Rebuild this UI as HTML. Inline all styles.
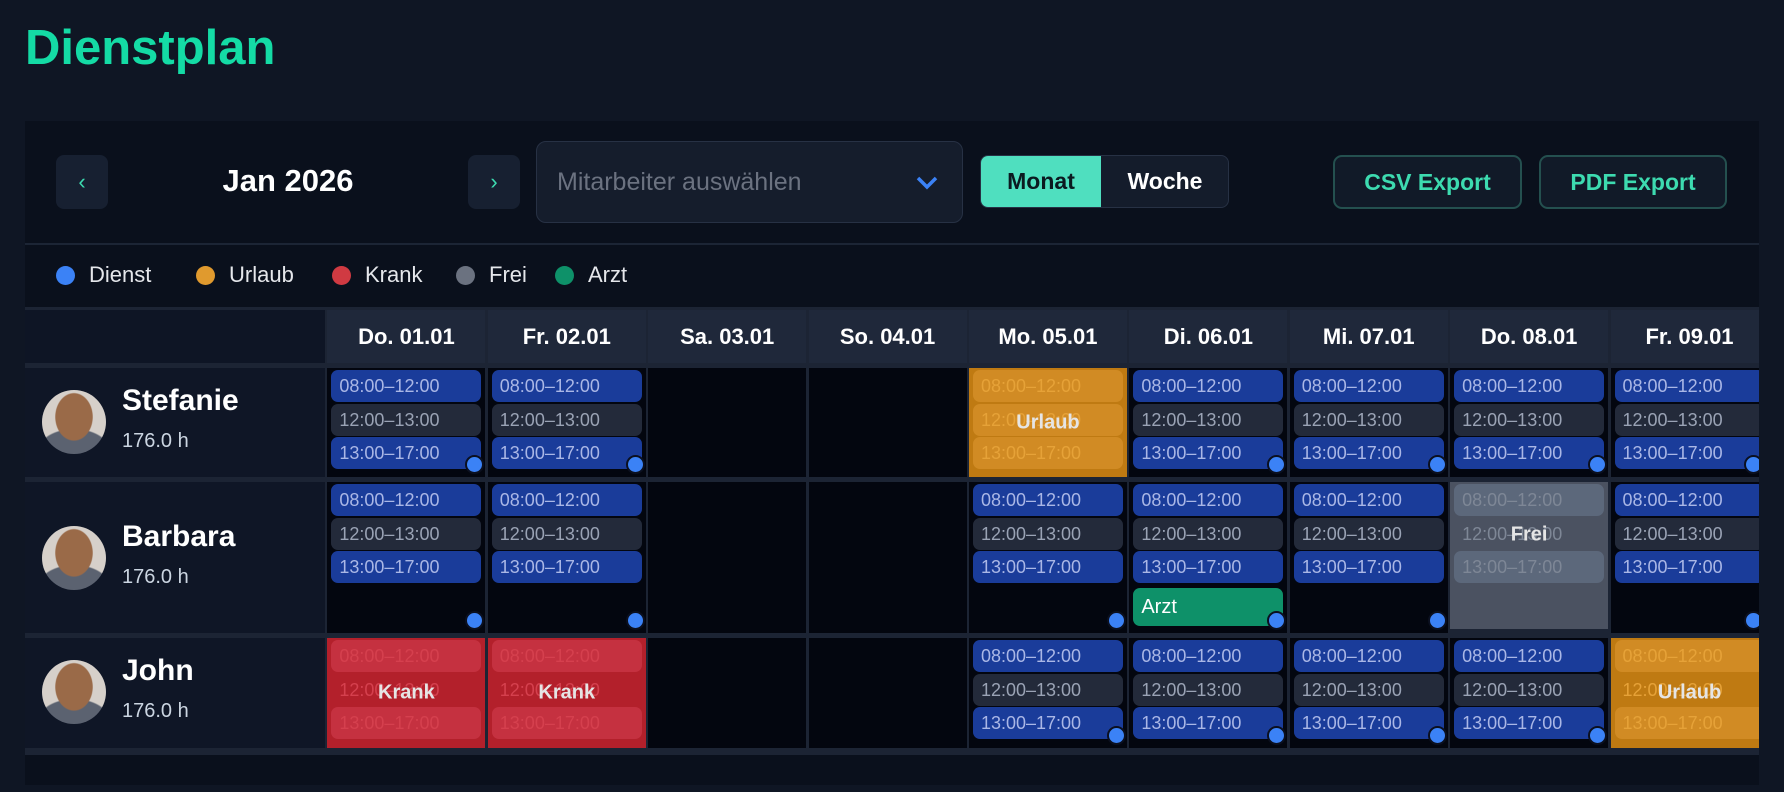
<!DOCTYPE html>
<html><head><meta charset="utf-8"><style>
*{box-sizing:border-box;margin:0;padding:0}
body{width:1784px;height:792px;background:#0f1624;font-family:"Liberation Sans",sans-serif;overflow:hidden;position:relative}
h1{position:absolute;left:25px;top:20px;font-size:49px;font-weight:700;color:#14dba5;letter-spacing:0}
.panel{position:absolute;left:25px;top:121px;width:1734px;height:664px;background:#0a101c;overflow:hidden}
.abs{position:absolute}
.nav{position:absolute;top:34px;width:52px;height:54px;background:#172031;border-radius:8px;color:#3ddbb0;font-size:22px;text-align:center;line-height:54px}
.sel{position:absolute;left:511px;top:20px;width:427px;height:82px;background:#151d2c;border:1px solid #273144;border-radius:10px}
.tog{position:absolute;left:955px;top:34px;width:249px;height:53px;background:#141c2b;border:1px solid #273144;border-radius:8px;overflow:hidden}
.btn{position:absolute;top:34px;height:54px;border:2px solid #24504f;border-radius:9px;background:#111a28;color:#3ddbb0;font-weight:700;font-size:23px;text-align:center;line-height:50px}
.sep{position:absolute;left:0;top:122px;width:100%;height:2px;background:#1c2535}
.leg{position:absolute;top:142px;height:24px;font-size:22px;color:#e5e7eb;line-height:24px}
.leg i{display:inline-block;width:19px;height:19px;border-radius:50%;vertical-align:-3px;margin-right:14px}
.grid{position:absolute;left:0;top:186px;width:1800px;height:448px;background:#1c2434;display:grid;grid-template-columns:300px repeat(9,158px);column-gap:2.4px;row-gap:5px;grid-template-rows:53px 109px 151px 110px;padding-left:0;padding-top:3px}
.hd{background:#1f283a;color:#fff;font-weight:700;font-size:22px;text-align:center;line-height:53px}
.corner{background:#0e1525}
.nm{background:#0f1626;position:relative}
.av{position:absolute;left:17px;width:64px;height:64px;border-radius:50%;background:radial-gradient(ellipse 30% 38% at 50% 42%,#9a6a48 0 95%,transparent 100%),radial-gradient(ellipse 60% 40% at 50% 100%,#5b6270 0 95%,transparent 100%),#d6d0ca}
.nm b{position:absolute;left:97px;font-size:30px;color:#fff;font-weight:700}
.nm span{position:absolute;left:97px;font-size:20px;color:#cbd5e1}
.c{background:#03060f;position:relative}
.ch{position:absolute;left:4px;right:4px;height:32px;border-radius:7px;font-size:18px;line-height:32px;padding-left:8px;color:#aab7e6}
.b{background:#1a3c9a}.g{background:#232a3a;color:#9aa3b5}
.t1{top:2px}.t2{top:36px}.t3{top:69px}
.dot{position:absolute;right:1px;width:19px;height:19px;border-radius:50%;background:#3b82f6;border:2px solid #0b1020}
.U{background:#bf7a12}.U .ch{background:rgba(230,160,60,.45);color:#e6a238}
.K{background:#b3202b}.K .ch{background:rgba(220,70,90,.45);color:#d5404e}
.F{background:#4b5261}.F .ch{background:rgba(110,125,150,.5);color:#7e8796}
.lab{position:absolute;left:0;right:0;top:50%;transform:translateY(-50%);text-align:center;color:#e5e5e5;font-weight:700;font-size:20px}
.arzt{position:absolute;left:4px;right:4px;top:106px;height:38px;background:#0e9169;border-radius:7px;color:#fff;font-size:20px;line-height:38px;padding-left:8px}
</style></head><body>
<h1>Dienstplan</h1>
<div class="panel">
<div class="nav" style="left:31px">‹</div>
<div class="abs" style="left:113px;width:300px;text-align:center;top:42px;font-size:31px;font-weight:700;color:#fff">Jan 2026</div>
<div class="nav" style="left:443px">›</div>
<div class="sel"><div class="abs" style="left:20px;top:26px;font-size:25px;color:#6b7280">Mitarbeiter auswählen</div>
<svg class="abs" style="left:378px;top:32px" width="24" height="18" viewBox="0 0 24 18"><path d="M3 4 L12 13 L21 4" stroke="#3b82f6" stroke-width="3.5" fill="none"/></svg></div>
<div class="tog"><div class="abs" style="left:0;top:0;width:120px;height:53px;background:#4fdfbf;color:#0b1a20;font-weight:700;font-size:23px;text-align:center;line-height:51px">Monat</div>
<div class="abs" style="left:120px;top:0;width:128px;height:53px;color:#fff;font-weight:700;font-size:23px;text-align:center;line-height:51px">Woche</div></div>
<div class="btn" style="left:1308px;width:189px">CSV Export</div>
<div class="btn" style="left:1514px;width:188px">PDF Export</div>
<div class="sep"></div>
<div class="leg" style="left:31px"><i style="background:#3b82f6"></i>Dienst</div>
<div class="leg" style="left:171px"><i style="background:#e09a2e"></i>Urlaub</div>
<div class="leg" style="left:307px"><i style="background:#d03a42"></i>Krank</div>
<div class="leg" style="left:431px"><i style="background:#6b7280"></i>Frei</div>
<div class="leg" style="left:530px"><i style="background:#0e9169"></i>Arzt</div>
<div class="grid">
<div class="corner"></div>
<div class="hd">Do. 01.01</div><div class="hd">Fr. 02.01</div><div class="hd">Sa. 03.01</div><div class="hd">So. 04.01</div><div class="hd">Mo. 05.01</div><div class="hd">Di. 06.01</div><div class="hd">Mi. 07.01</div><div class="hd">Do. 08.01</div><div class="hd">Fr. 09.01</div>
<!-- row1 -->
<div class="nm"><div class="av" style="top:22px"></div><b style="top:16px">Stefanie</b><span style="top:62px">176.0 h</span></div>
<div class="c"><div class="ch b t1">08:00–12:00</div><div class="ch g t2">12:00–13:00</div><div class="ch b t3">13:00–17:00</div><div class="dot" style="bottom:3px"></div></div>
<div class="c"><div class="ch b t1">08:00–12:00</div><div class="ch g t2">12:00–13:00</div><div class="ch b t3">13:00–17:00</div><div class="dot" style="bottom:3px"></div></div>
<div class="c"></div><div class="c"></div>
<div class="c U"><div class="ch t1">08:00–12:00</div><div class="ch t2">12:00–13:00</div><div class="ch t3">13:00–17:00</div><div class="lab">Urlaub</div></div>
<div class="c"><div class="ch b t1">08:00–12:00</div><div class="ch g t2">12:00–13:00</div><div class="ch b t3">13:00–17:00</div><div class="dot" style="bottom:3px"></div></div>
<div class="c"><div class="ch b t1">08:00–12:00</div><div class="ch g t2">12:00–13:00</div><div class="ch b t3">13:00–17:00</div><div class="dot" style="bottom:3px"></div></div>
<div class="c"><div class="ch b t1">08:00–12:00</div><div class="ch g t2">12:00–13:00</div><div class="ch b t3">13:00–17:00</div><div class="dot" style="bottom:3px"></div></div>
<div class="c"><div class="ch b t1">08:00–12:00</div><div class="ch g t2">12:00–13:00</div><div class="ch b t3">13:00–17:00</div><div class="dot" style="bottom:3px;right:6px"></div></div>
<!-- row2 -->
<div class="nm"><div class="av" style="top:44px"></div><b style="top:38px">Barbara</b><span style="top:84px">176.0 h</span></div>
<div class="c"><div class="ch b t1">08:00–12:00</div><div class="ch g t2">12:00–13:00</div><div class="ch b t3">13:00–17:00</div><div class="dot" style="bottom:3px"></div></div>
<div class="c"><div class="ch b t1">08:00–12:00</div><div class="ch g t2">12:00–13:00</div><div class="ch b t3">13:00–17:00</div><div class="dot" style="bottom:3px"></div></div>
<div class="c"></div><div class="c"></div>
<div class="c"><div class="ch b t1">08:00–12:00</div><div class="ch g t2">12:00–13:00</div><div class="ch b t3">13:00–17:00</div><div class="dot" style="bottom:3px"></div></div>
<div class="c"><div class="ch b t1">08:00–12:00</div><div class="ch g t2">12:00–13:00</div><div class="ch b t3">13:00–17:00</div><div class="arzt">Arzt</div><div class="dot" style="bottom:3px"></div></div>
<div class="c"><div class="ch b t1">08:00–12:00</div><div class="ch g t2">12:00–13:00</div><div class="ch b t3">13:00–17:00</div><div class="dot" style="bottom:3px"></div></div>
<div class="c F" style="margin-bottom:4px"><div class="ch t1">08:00–12:00</div><div class="ch t2" style="background:transparent">12:00–13:00</div><div class="ch t3">13:00–17:00</div><div class="lab" style="top:36%">Frei</div></div>
<div class="c"><div class="ch b t1">08:00–12:00</div><div class="ch g t2">12:00–13:00</div><div class="ch b t3">13:00–17:00</div><div class="dot" style="bottom:3px;right:6px"></div></div>
<!-- row3 -->
<div class="nm"><div class="av" style="top:22px"></div><b style="top:16px">John</b><span style="top:62px">176.0 h</span></div>
<div class="c K"><div class="ch t1">08:00–12:00</div><div class="ch t2" style="background:transparent">12:00–13:00</div><div class="ch t3">13:00–17:00</div><div class="lab">Krank</div></div>
<div class="c K"><div class="ch t1">08:00–12:00</div><div class="ch t2" style="background:transparent">12:00–13:00</div><div class="ch t3">13:00–17:00</div><div class="lab">Krank</div></div>
<div class="c"></div><div class="c"></div>
<div class="c"><div class="ch b t1">08:00–12:00</div><div class="ch g t2">12:00–13:00</div><div class="ch b t3">13:00–17:00</div><div class="dot" style="bottom:3px"></div></div>
<div class="c"><div class="ch b t1">08:00–12:00</div><div class="ch g t2">12:00–13:00</div><div class="ch b t3">13:00–17:00</div><div class="dot" style="bottom:3px"></div></div>
<div class="c"><div class="ch b t1">08:00–12:00</div><div class="ch g t2">12:00–13:00</div><div class="ch b t3">13:00–17:00</div><div class="dot" style="bottom:3px"></div></div>
<div class="c"><div class="ch b t1">08:00–12:00</div><div class="ch g t2">12:00–13:00</div><div class="ch b t3">13:00–17:00</div><div class="dot" style="bottom:3px"></div></div>
<div class="c U"><div class="ch t1">08:00–12:00</div><div class="ch t2" style="background:transparent">12:00–13:00</div><div class="ch t3">13:00–17:00</div><div class="lab">Urlaub</div></div>
</div>
</div>
</body></html>
